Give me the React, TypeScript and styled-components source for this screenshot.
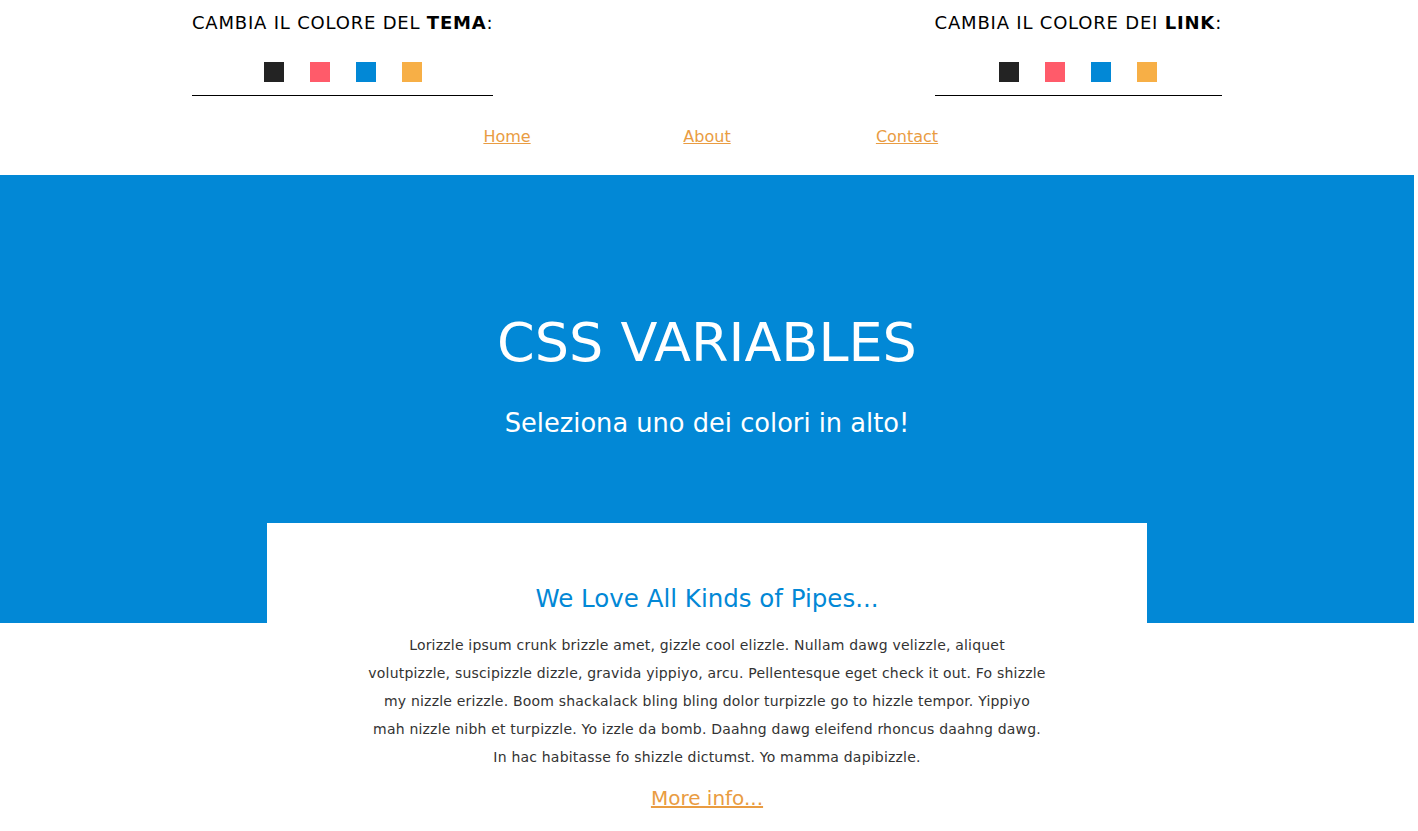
import React from "react";
import styled, { createGlobalStyle } from "styled-components";

const Global = createGlobalStyle`
  html, body { margin: 0; padding: 0; background: #fff; }
  body { font-family: "DejaVu Sans", sans-serif; color: #000; }
  #root { width: calc(100% - 4px); }
`;

const Header = styled.header`
  width: 1030px;
  margin: 0 auto;
  display: flex;
  justify-content: space-between;
  align-items: flex-start;
  padding-top: 12px;
`;

const Picker = styled.div`
  display: flex;
  flex-direction: column;
  align-items: center;
  border-bottom: 1px solid #000;
  padding-bottom: 13px;
`;

const PickerTitle = styled.div`
  font-size: 18px;
  line-height: 22px;
  letter-spacing: 0.8px;
  strong { font-weight: bold; }
`;

const Swatches = styled.div`
  display: flex;
  gap: 26px;
  margin-top: 28px;
`;

const Swatch = styled.button<{ $c: string }>`
  width: 20px;
  height: 20px;
  padding: 0;
  border: 0;
  background: ${(p) => p.$c};
  cursor: pointer;
`;

const Nav = styled.nav`
  display: flex;
  justify-content: center;
  padding: 31px 0 28px;
`;

const NavItem = styled.a`
  width: 200px;
  text-align: center;
  font-size: 16px;
  line-height: 20px;
  color: #e99c42;
  text-decoration: underline;
`;

const Hero = styled.section`
  background: #0288d6;
  height: 448px;
  display: flex;
  flex-direction: column;
  align-items: center;
  color: #fff;
  padding-top: 134px;
  box-sizing: border-box;
`;

const HeroTitle = styled.h1`
  margin: 0;
  font-weight: normal;
  font-size: 54px;
  line-height: 68px;
`;

const HeroSub = styled.p`
  margin: 30px 0 0;
  font-size: 25.7px;
  line-height: 32px;
`;

const Card = styled.article`
  width: 880px;
  margin: -100px auto 0;
  background: #fff;
  position: relative;
  padding: 60px 80px 20px;
  box-sizing: border-box;
  text-align: center;
`;

const CardTitle = styled.h2`
  margin: 0;
  font-weight: normal;
  font-size: 24.5px;
  line-height: 32px;
  color: #0288d6;
`;

const CardText = styled.p`
  margin: 16px 0 0;
  font-size: 14px;
  line-height: 28px;
  letter-spacing: 0.2px;
  color: #333;
  white-space: nowrap;
`;

const More = styled.a`
  display: inline-block;
  margin-top: 14px;
  font-size: 20px;
  line-height: 26px;
  color: #e99c42;
  text-decoration: underline;
`;

const colors = ["#232323", "#ff5b6a", "#0288d6", "#f7af46"];

const lines = [
  "Lorizzle ipsum crunk brizzle amet, gizzle cool elizzle. Nullam dawg velizzle, aliquet",
  "volutpizzle, suscipizzle dizzle, gravida yippiyo, arcu. Pellentesque eget check it out. Fo shizzle",
  "my nizzle erizzle. Boom shackalack bling bling dolor turpizzle go to hizzle tempor. Yippiyo",
  "mah nizzle nibh et turpizzle. Yo izzle da bomb. Daahng dawg eleifend rhoncus daahng dawg.",
  "In hac habitasse fo shizzle dictumst. Yo mamma dapibizzle.",
];

export default function App() {
  return (
    <>
      <Global />
      <Header>
        <Picker>
          <PickerTitle>
            CAMBIA IL COLORE DEL <strong>TEMA</strong>:
          </PickerTitle>
          <Swatches>
            {colors.map((c) => (
              <Swatch key={c} $c={c} aria-label={c} />
            ))}
          </Swatches>
        </Picker>
        <Picker>
          <PickerTitle>
            CAMBIA IL COLORE DEI <strong>LINK</strong>:
          </PickerTitle>
          <Swatches>
            {colors.map((c) => (
              <Swatch key={c} $c={c} aria-label={c} />
            ))}
          </Swatches>
        </Picker>
      </Header>
      <Nav>
        <NavItem href="#">Home</NavItem>
        <NavItem href="#">About</NavItem>
        <NavItem href="#">Contact</NavItem>
      </Nav>
      <Hero>
        <HeroTitle>CSS VARIABLES</HeroTitle>
        <HeroSub>Seleziona uno dei colori in alto!</HeroSub>
      </Hero>
      <Card>
        <CardTitle>We Love All Kinds of Pipes...</CardTitle>
        <CardText>
          {lines.map((l, i) => (
            <React.Fragment key={i}>
              {l}
              {i < lines.length - 1 && <br />}
            </React.Fragment>
          ))}
        </CardText>
        <More href="#">More info...</More>
      </Card>
    </>
  );
}
